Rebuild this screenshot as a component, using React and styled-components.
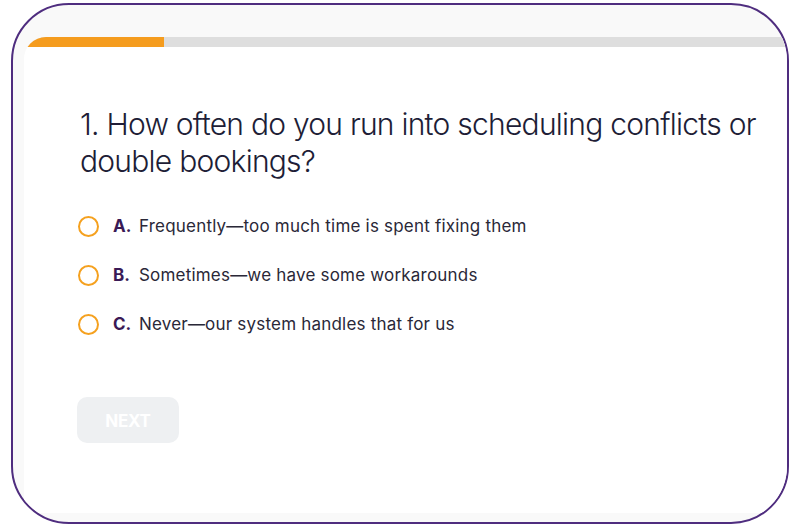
import styled, { createGlobalStyle } from "styled-components";

const Global = createGlobalStyle`
  html, body {
    margin: 0;
    padding: 0;
    background: #ffffff;
  }
  body {
    font-family: Inter, "Noto Sans", sans-serif;
  }
`;

const Frame = styled.div`
  box-sizing: border-box;
  width: 778px;
  height: 521px;
  margin: 3px 0 0 11px;
  border: 2px solid #4f2d7f;
  border-radius: 58px;
  overflow: hidden;
  background: #f9f9f9;
  padding: 32px 0 9px 11px;
  display: flex;
`;

const Card = styled.div`
  flex: 1;
  background: #ffffff;
  border-top-left-radius: 22px;
  overflow: hidden;
  display: flex;
  flex-direction: column;
`;

const Track = styled.div`
  height: 10px;
  background: #dedede;
  display: flex;
`;

const Fill = styled.div`
  height: 100%;
  background: #f59c1e;
`;

const Body = styled.div`
  padding: 59px 0 0 56px;
  display: flex;
  flex-direction: column;
`;

const Question = styled.h1`
  margin: 0;
  font-size: 30px;
  line-height: 37px;
  font-weight: 300;
  color: #201d36;
  letter-spacing: -0.75px;
  max-width: 700px;
`;

const Options = styled.div`
  margin-top: 31px;
  display: flex;
  flex-direction: column;
  gap: 19px;
`;

const Option = styled.label`
  height: 30px;
  display: flex;
  align-items: center;
  cursor: pointer;
`;

const Radio = styled.span`
  box-sizing: border-box;
  width: 21px;
  height: 21px;
  border-radius: 50%;
  border: 2px solid #f5a11f;
  margin-left: -2px;
  margin-right: 14px;
`;

const Letter = styled.span`
  font-weight: 700;
  font-size: 17px;
  color: #3a1a56;
  width: 26px;
`;

const Text = styled.span`
  font-size: 17px;
  color: #2a2838;
  letter-spacing: 0.2px;
`;

const NextButton = styled.button`
  margin-top: 58px;
  margin-left: -3px;
  width: 102px;
  height: 46px;
  border: none;
  border-radius: 10px;
  background: #eef0f2;
  color: #ffffff;
  font-family: Inter, sans-serif;
  font-weight: 700;
  font-size: 17px;
  letter-spacing: -0.3px;
  padding-top: 3px;
`;

const options = [
  { key: "A.", text: "Frequently\u2014too much time is spent fixing them" },
  { key: "B.", text: "Sometimes\u2014we have some workarounds" },
  { key: "C.", text: "Never\u2014our system handles that for us" },
];

export default function App() {
  const progress = 140;
  return (
    <>
      <Global />
      <Frame>
        <Card>
          <Track>
            <Fill style={{ width: progress }} />
          </Track>
          <Body>
            <Question>
              1. How often do you run into scheduling conflicts or double bookings?
            </Question>
            <Options>
              {options.map((o) => (
                <Option key={o.key}>
                  <Radio />
                  <Letter>{o.key}</Letter>
                  <Text>{o.text}</Text>
                </Option>
              ))}
            </Options>
            <NextButton>NEXT</NextButton>
          </Body>
        </Card>
      </Frame>
    </>
  );
}
